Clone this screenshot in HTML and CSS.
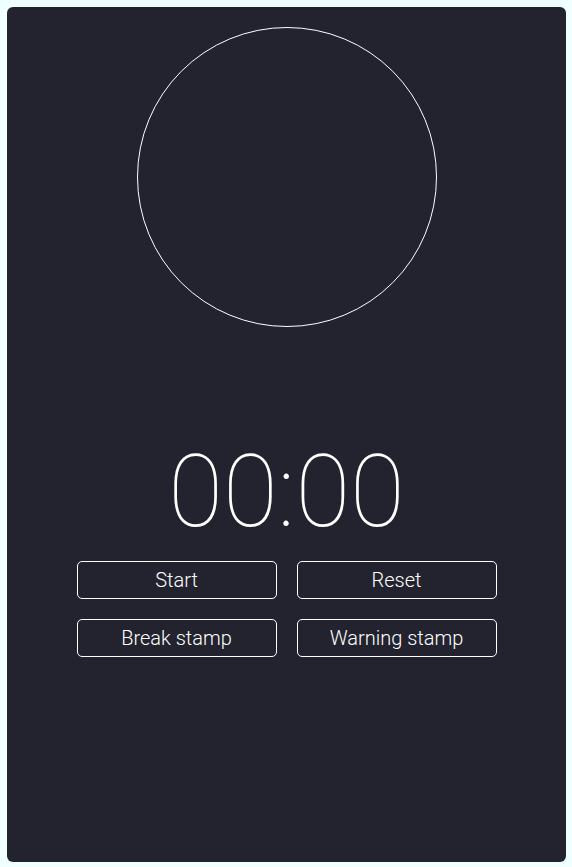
FILE: index.html
```html
<!DOCTYPE html>
<html>
<head>
<meta charset="utf-8">
<link rel="stylesheet" href="styles.css">
</head>
<body>
<div class="card">
  <div class="ring"></div>
  <div class="timer">00:00</div>
  <div class="controls">
    <button class="btn">Start</button>
    <button class="btn">Reset</button>
    <button class="btn">Break stamp</button>
    <button class="btn">Warning stamp</button>
  </div>
</div>
</body>
</html>
```
FILE: styles.css
```css
html, body {
  margin: 0;
  padding: 0;
  background: #f0ffff;
}
body {
  padding: 7px;
  font-family: Roboto, "Noto Sans", sans-serif;
}
.card {
  width: 559px;
  height: 855px;
  box-sizing: border-box;
  background: #22232e;
  border-radius: 6px;
  padding-top: 20px;
  display: flex;
  flex-direction: column;
  align-items: center;
}
.ring {
  width: 300px;
  height: 300px;
  box-sizing: border-box;
  border: 1px solid #ffffff;
  border-radius: 50%;
}
.timer {
  margin-top: 115px;
  font-size: 100px;
  line-height: 100px;
  font-weight: 100;
  color: #ffffff;
  height: 100px;
}
.controls {
  margin-top: 19px;
  display: grid;
  grid-template-columns: 200px 200px;
  column-gap: 20px;
  row-gap: 20px;
}
.btn {
  height: 38px;
  box-sizing: border-box;
  background: transparent;
  border: 1px solid #ffffff;
  border-radius: 5px;
  color: #ffffff;
  font-family: Roboto, "Noto Sans", sans-serif;
  font-weight: 300;
  font-size: 20px;
  padding: 0;
}
```
